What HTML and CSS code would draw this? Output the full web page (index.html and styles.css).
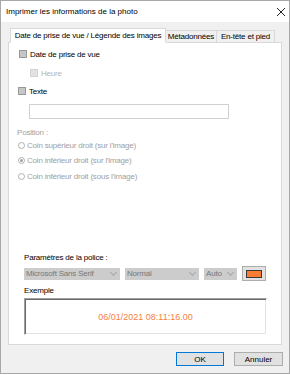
FILE: index.html
```html
<!DOCTYPE html>
<html lang="fr">
<head>
  <meta charset="UTF-8">
  <meta name="viewport" content="width=device-width, initial-scale=1.0">
  <title>Imprimer les informations de la photo</title>
  <link rel="stylesheet" href="styles.css">
</head>
<body>
  <div class="window">
    <div class="titlebar">
      <span class="title">Imprimer les informations de la photo</span>
      <svg class="close" width="10" height="10" viewBox="0 0 10 10">
        <path d="M1 1 L9 9 M9 1 L1 9" stroke="#222" stroke-width="1" fill="none"/>
      </svg>
    </div>

    <div class="client">
      <div class="tabs">
        <div class="tab active tab-date">Date de prise de vue / Légende des images</div>
        <div class="tab tab-meta">Métadonnées</div>
        <div class="tab tab-head">En-tête et pied</div>
      </div>

      <div class="panel">
        <div class="row row-date"><span class="check"></span>Date de prise de vue</div>
        <div class="row row-heure disabled"><span class="check light"></span>Heure</div>
        <div class="row row-texte"><span class="check"></span>Texte</div>
        <div class="textbox"></div>

        <div class="row row-position disabled">Position :</div>
        <div class="row radio-row r1 disabled"><span class="radio"></span>Coin supérieur droit (sur l'image)</div>
        <div class="row radio-row r2 disabled"><span class="radio checked"></span>Coin inférieur droit (sur l'image)</div>
        <div class="row radio-row r3 disabled"><span class="radio"></span>Coin inférieur droit (sous l'image)</div>

        <div class="font-group">
          <div class="row">Paramètres de la police :</div>
          <div class="font-controls">
            <div class="select w-font">Microsoft Sans Serif<span class="chev"></span></div>
            <div class="select w-style">Normal<span class="chev"></span></div>
            <div class="select w-size">Auto<span class="chev"></span></div>
            <div class="color-btn"><span class="swatch"></span></div>
          </div>
          <div class="row row-exemple">Exemple</div>
          <div class="preview">06/01/2021 08:11:16.00</div>
        </div>
      </div>

      <div class="buttons">
        <button class="btn default">OK</button>
        <button class="btn">Annuler</button>
      </div>
    </div>
  </div>
</body>
</html>
```

FILE: styles.css
```css
body {
  margin: 0;
  padding: 0;
  background-color: #fff;
  font-family: "Liberation Sans", Arial, sans-serif;
  font-size: 8px;
  letter-spacing: -0.2px;
  color: #000;
}
.window {
  box-sizing: border-box;
  width: 290px;
  height: 374px;
  border: 1px solid #a8a8a8;
  display: flex;
  flex-direction: column;
}
.titlebar {
  height: 21px;
  background-color: #fff;
  display: flex;
  align-items: center;
  justify-content: space-between;
  padding: 0 3px 0 5px;
}
.title {
  letter-spacing: 0;
}
.close {
  display: block;
}
.client {
  flex: 1;
  background-color: #f0f0f0;
  padding: 0 7px;
  display: flex;
  flex-direction: column;
}
.tabs {
  display: flex;
  align-items: flex-end;
  margin-top: 6px;
  padding-left: 2px;
  margin-bottom: -1px;
}
.tab {
  box-sizing: border-box;
  height: 13px;
  line-height: 11px;
  border: 1px solid #d9d9d9;
  border-left: none;
  background-color: #f0f0f0;
  text-align: center;
  white-space: nowrap;
}
.tab.active {
  height: 15px;
  line-height: 13px;
  border-left: 1px solid #d9d9d9;
  border-bottom-color: #fff;
  background-color: #fff;
  position: relative;
  z-index: 1;
}
.tab-date { width: 156px; }
.tab-meta { width: 51px; }
.tab-head { width: 58px; }
.panel {
  box-sizing: border-box;
  height: 303px;
  background-color: #fff;
  border: 1px solid #d9d9d9;
  padding: 5px 0 9px 0;
  display: flex;
  flex-direction: column;
}
.row {
  height: 12px;
  display: flex;
  align-items: center;
  white-space: nowrap;
}
.disabled {
  color: #a0a0a0;
}
.check {
  box-sizing: border-box;
  width: 8px;
  height: 8px;
  border: 1px solid #999;
  background-color: #c6c6c6;
  margin-right: 3px;
}
.check.light {
  border-color: #d2d2d2;
  background-color: #e2e2e2;
}
.row-date {
  padding-left: 10px;
}
.row-heure {
  margin-top: 7px;
  padding-left: 21px;
  color: #b4b4b4;
}
.row-texte {
  margin-top: 6px;
  padding-left: 9px;
}
.textbox {
  box-sizing: border-box;
  width: 200px;
  height: 15px;
  margin: 7px 0 0 20px;
  border: 1px solid #d0d0d0;
  background-color: #fff;
}
.row-position {
  margin-top: 7px;
  padding-left: 8px;
}
.radio-row {
  padding-left: 9px;
}
.r1 { margin-top: 1px; }
.r2 { margin-top: 3px; }
.r3 { margin-top: 4px; }
.radio {
  box-sizing: border-box;
  width: 7px;
  height: 7px;
  border: 1px solid #b0b0b0;
  border-radius: 50%;
  margin-right: 2px;
  display: flex;
  align-items: center;
  justify-content: center;
}
.radio.checked::after {
  content: "";
  width: 3px;
  height: 3px;
  border-radius: 50%;
  background-color: #a0a0a0;
}
.font-group {
  margin-top: auto;
  padding-left: 15px;
  display: flex;
  flex-direction: column;
}
.font-controls {
  display: flex;
  align-items: center;
  gap: 5px;
  margin-top: 3px;
  height: 15px;
}
.select {
  box-sizing: border-box;
  height: 12px;
  background-color: #cccccc;
  color: #777;
  padding: 0 2px;
  display: flex;
  align-items: center;
  justify-content: space-between;
  white-space: nowrap;
}
.w-font { width: 96px; }
.w-style { width: 74px; }
.w-size { width: 33px; }
.chev {
  width: 4px;
  height: 4px;
  border-right: 1px solid #a8a8a8;
  border-bottom: 1px solid #a8a8a8;
  transform: rotate(45deg);
  margin: -3px 2px 0 0;
}
.color-btn {
  box-sizing: border-box;
  width: 24px;
  height: 15px;
  border: 1px solid #adadad;
  background-color: #e1e1e1;
  display: flex;
  align-items: center;
  justify-content: center;
}
.swatch {
  box-sizing: border-box;
  width: 16px;
  height: 8px;
  border: 1px solid #3a3a3a;
  background-color: #fb7d35;
}
.row-exemple {
  margin-top: 3px;
}
.preview {
  box-sizing: border-box;
  width: 243px;
  height: 37px;
  margin-top: 2px;
  border-top: 1px solid #a0a0a0;
  border-left: 1px solid #a0a0a0;
  border-right: 1px solid #fff;
  border-bottom: 1px solid #fff;
  box-shadow: inset 1px 1px 0 #696969, inset -1px -1px 0 #e3e3e3;
  display: flex;
  align-items: center;
  justify-content: center;
  font-size: 9px;
  letter-spacing: 0;
  color: #f5813f;
}
.buttons {
  display: flex;
  justify-content: flex-end;
  gap: 10px;
  margin-top: 7px;
  margin-right: -1px;
}
.btn {
  box-sizing: border-box;
  width: 49px;
  height: 14px;
  padding: 0;
  border: 1px solid #adadad;
  background-color: #e1e1e1;
  font-family: "Liberation Sans", Arial, sans-serif;
  font-size: 8px;
  color: #000;
}
.btn.default {
  width: 48px;
  border-color: #0078d7;
}
```
